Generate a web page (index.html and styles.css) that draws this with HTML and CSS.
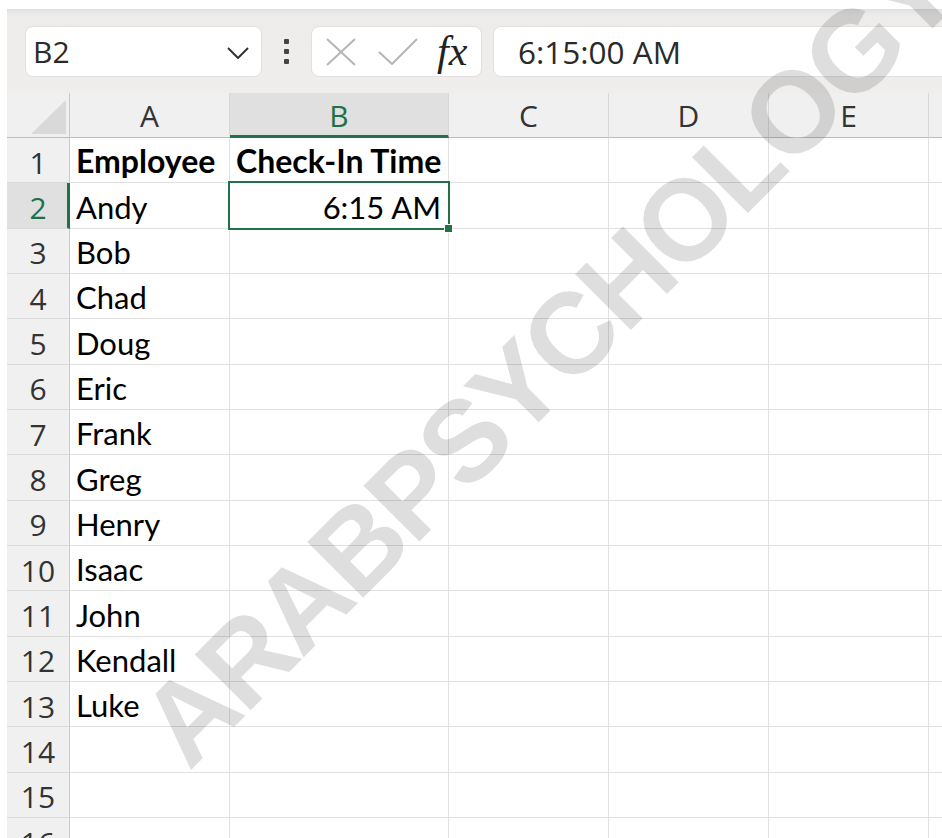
FILE: index.html
```html
<!DOCTYPE html>
<html lang="en">
<head>
<meta charset="utf-8">
<title>Check-In Times</title>
<link rel="stylesheet" href="styles.css">
</head>
<body>
<div class="app">
  <div class="topline"></div>
  <div class="formula-bar">
    <div class="name-box">
      <span class="name-ref">B2</span>
      <svg class="chevron" width="22" height="12" viewBox="0 0 22 12"><path d="M1 1 L11 11 L21 1" fill="none" stroke="#333" stroke-width="2"/></svg>
    </div>
    <div class="grip"><i></i><i></i><i></i></div>
    <div class="fx-box">
      <svg class="fx-icon" width="30" height="28" viewBox="0 0 30 28"><path d="M1 1 L29 27 M29 1 L1 27" fill="none" stroke="#b5b5b5" stroke-width="2"/></svg>
      <svg class="fx-icon" width="40" height="27" viewBox="0 0 40 27"><path d="M1 14 L14 26 L39 1" fill="none" stroke="#b5b5b5" stroke-width="2"/></svg>
      <span class="fx">fx</span>
    </div>
    <div class="formula-input">6:15:00 AM</div>
  </div>

  <div class="sheet">
    <div class="corner"><span class="corner-tri"></span></div>
    <div class="col-head">A</div>
    <div class="col-head is-active">B</div>
    <div class="col-head">C</div>
    <div class="col-head">D</div>
    <div class="col-head">E</div>
    <div class="col-head"></div>

    <div class="row-head">1</div><div class="cell bold">Employee</div><div class="cell bold">Check-In Time</div><div class="cell"></div><div class="cell"></div><div class="cell"></div><div class="cell"></div>
    <div class="row-head is-active">2</div><div class="cell">Andy</div><div class="cell num selected">6:15 AM<span class="sel-frame"><span class="fill-handle"></span></span></div><div class="cell"></div><div class="cell"></div><div class="cell"></div><div class="cell"></div>
    <div class="row-head">3</div><div class="cell">Bob</div><div class="cell"></div><div class="cell"></div><div class="cell"></div><div class="cell"></div><div class="cell"></div>
    <div class="row-head">4</div><div class="cell">Chad</div><div class="cell"></div><div class="cell"></div><div class="cell"></div><div class="cell"></div><div class="cell"></div>
    <div class="row-head">5</div><div class="cell">Doug</div><div class="cell"></div><div class="cell"></div><div class="cell"></div><div class="cell"></div><div class="cell"></div>
    <div class="row-head">6</div><div class="cell">Eric</div><div class="cell"></div><div class="cell"></div><div class="cell"></div><div class="cell"></div><div class="cell"></div>
    <div class="row-head">7</div><div class="cell">Frank</div><div class="cell"></div><div class="cell"></div><div class="cell"></div><div class="cell"></div><div class="cell"></div>
    <div class="row-head">8</div><div class="cell">Greg</div><div class="cell"></div><div class="cell"></div><div class="cell"></div><div class="cell"></div><div class="cell"></div>
    <div class="row-head">9</div><div class="cell">Henry</div><div class="cell"></div><div class="cell"></div><div class="cell"></div><div class="cell"></div><div class="cell"></div>
    <div class="row-head">10</div><div class="cell">Isaac</div><div class="cell"></div><div class="cell"></div><div class="cell"></div><div class="cell"></div><div class="cell"></div>
    <div class="row-head">11</div><div class="cell">John</div><div class="cell"></div><div class="cell"></div><div class="cell"></div><div class="cell"></div><div class="cell"></div>
    <div class="row-head">12</div><div class="cell">Kendall</div><div class="cell"></div><div class="cell"></div><div class="cell"></div><div class="cell"></div><div class="cell"></div>
    <div class="row-head">13</div><div class="cell">Luke</div><div class="cell"></div><div class="cell"></div><div class="cell"></div><div class="cell"></div><div class="cell"></div>
    <div class="row-head">14</div><div class="cell"></div><div class="cell"></div><div class="cell"></div><div class="cell"></div><div class="cell"></div><div class="cell"></div>
    <div class="row-head">15</div><div class="cell"></div><div class="cell"></div><div class="cell"></div><div class="cell"></div><div class="cell"></div><div class="cell"></div>
    <div class="row-head">16</div><div class="cell"></div><div class="cell"></div><div class="cell"></div><div class="cell"></div><div class="cell"></div><div class="cell"></div>
  </div>

  <div class="watermark">ARABPSYCHOLOGY</div>
</div>
</body>
</html>
```

FILE: styles.css
```css
html, body {
  margin: 0;
  padding: 0;
  background: #ffffff;
}

body {
  width: 942px;
  height: 838px;
  overflow: hidden;
}

.app {
  position: relative;
  height: 838px;
  padding-left: 7px;
  overflow: hidden;
}

.topline {
  height: 9px;
  margin-left: -7px;
  background: #ffffff;
}

/* formula bar */
.formula-bar {
  height: 84px;
  box-sizing: border-box;
  padding: 17px 0 16px 18px;
  display: flex;
  align-items: stretch;
  background: linear-gradient(#e2e0de 0, #e9e7e5 3px, #eeecea 7px, #f0eeec 100%);
  font-family: "Open Sans", "Noto Sans", sans-serif;
  color: #222;
}

.name-box {
  width: 237px;
  box-sizing: border-box;
  display: flex;
  align-items: center;
  justify-content: space-between;
  padding: 0 12px 0 6px;
  background: #fff;
  border: 1px solid #e2e0de;
  border-radius: 8px;
}

.name-ref {
  font-size: 30px;
  line-height: 1;
  padding-left: 1px;
  color: #2a2a2a;
}

.chevron {
  display: block;
  margin-top: 2px;
}

.grip {
  width: 49px;
  display: flex;
  flex-direction: column;
  align-items: center;
  justify-content: center;
  gap: 5px;
}

.grip i {
  display: block;
  width: 5px;
  height: 5px;
  background: #444;
  border-radius: 1px;
}

.fx-box {
  width: 171px;
  box-sizing: border-box;
  display: flex;
  align-items: center;
  padding: 0 0 0 14px;
  gap: 22px;
  background: #fff;
  border: 1px solid #e2e0de;
  border-radius: 8px;
}

.fx-icon {
  display: block;
}

.fx {
  font-family: "Liberation Serif", "DejaVu Serif", serif;
  font-style: italic;
  font-size: 42px;
  line-height: 1;
  color: #222;
  margin-left: -3px;
  margin-top: -2px;
}

.formula-input {
  flex: 1;
  margin-left: 11px;
  margin-right: -20px;
  display: flex;
  align-items: center;
  padding-left: 24px;
  font-size: 31.5px;
  color: #2a2a2a;
  background: #fff;
  border: 1px solid #e2e0de;
  border-radius: 8px;
}

/* worksheet grid */
.sheet {
  display: grid;
  grid-template-columns: 63px 160px 219px 160px 160px 160px 1fr;
  grid-template-rows: 45px;
  grid-auto-rows: 45.35px;
}

.corner,
.col-head,
.row-head,
.cell {
  box-sizing: border-box;
  min-width: 0;
}

.corner {
  position: relative;
  background: #f0f0f0;
  border-right: 1px solid #c9c9c9;
  border-bottom: 1px solid #bdbdbd;
}

.corner-tri {
  position: absolute;
  right: 3px;
  bottom: 3px;
  width: 0;
  height: 0;
  border-left: 35px solid transparent;
  border-bottom: 34px solid #d9d9d9;
}

.col-head {
  display: flex;
  align-items: center;
  justify-content: center;
  background: #f0f0f0;
  border-right: 1px solid #d7d7d7;
  border-bottom: 1px solid #bdbdbd;
  font-family: "Open Sans", "Noto Sans", sans-serif;
  font-size: 30px;
  line-height: 1;
  color: #333;
  padding-top: 2px;
}

.col-head.is-active {
  background: #e0e0e0;
  color: #1e7145;
  border-bottom: 3px solid #217346;
  padding-top: 4px;
}

.row-head {
  display: flex;
  align-items: center;
  justify-content: center;
  background: #f0f0f0;
  border-right: 1px solid #c9c9c9;
  border-bottom: 1px solid #dadada;
  font-family: "Open Sans", "Noto Sans", sans-serif;
  font-size: 30px;
  line-height: 1;
  color: #333;
  padding-top: 5px;
}

.row-head.is-active {
  background: #e0e0e0;
  color: #1e7145;
  border-right: 3px solid #217346;
  padding-left: 2px;
}

.cell {
  position: relative;
  display: flex;
  align-items: flex-end;
  padding: 0 8px 5px 6px;
  border-right: 1px solid #e1e1e1;
  border-bottom: 1px solid #e1e1e1;
  font-family: "Lato", "Open Sans", sans-serif;
  font-size: 31px;
  line-height: 1;
  color: #000;
  white-space: nowrap;
}

.cell.bold {
  font-weight: 700;
  font-size: 32px;
}

.cell.num {
  justify-content: flex-end;
  padding-right: 7px;
}

.cell.selected {
  z-index: 2;
}

.sel-frame {
  position: absolute;
  left: -2px;
  top: -2px;
  right: -2px;
  bottom: -2px;
  border: 2px solid #217346;
}

.fill-handle {
  position: absolute;
  right: -5px;
  bottom: -5px;
  width: 7px;
  height: 7px;
  background: #217346;
  border: 1px solid #fff;
}

/* diagonal watermark */
.watermark {
  position: absolute;
  left: 548px;
  top: 357px;
  transform: translate(-50%, -50%) rotate(-45deg);
  font-family: "Liberation Sans", Arial, sans-serif;
  font-weight: 700;
  font-size: 115px;
  line-height: 1;
  letter-spacing: -3.5px;
  white-space: nowrap;
  color: rgba(0, 0, 0, 0.13);
  pointer-events: none;
  z-index: 5;
}
```
